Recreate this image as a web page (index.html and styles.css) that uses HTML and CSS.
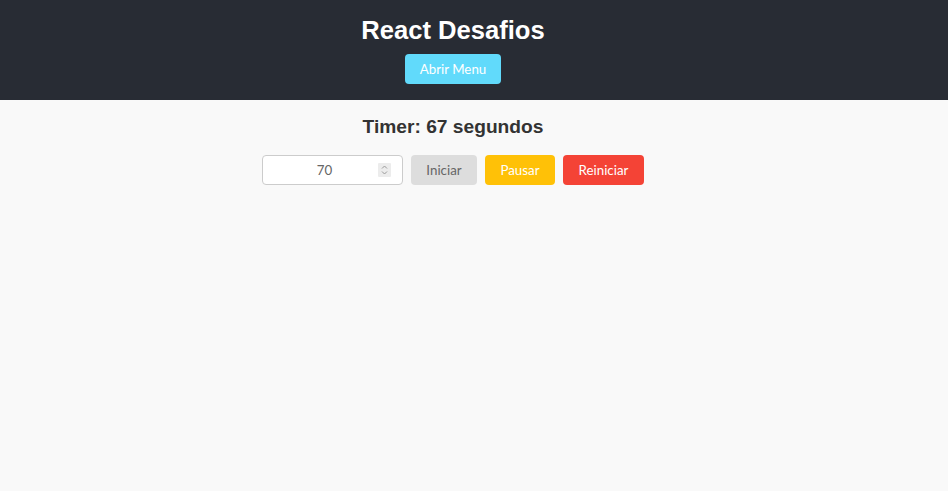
FILE: index.html
```html
<!DOCTYPE html>
<html lang="pt-BR">
<head>
<meta charset="utf-8">
<title>React Desafios</title>
<link rel="stylesheet" href="styles.css">
</head>
<body>
<header class="app-header">
  <div class="inner">
    <h1 class="title">React Desafios</h1>
    <button class="btn btn-menu">Abrir Menu</button>
  </div>
</header>
<main class="content">
  <h2 class="timer">Timer: 67 segundos</h2>
  <div class="controls">
    <div class="num-input">
      <span class="num-value">70</span>
      <svg class="spinner" width="13" height="14" viewBox="0 0 13 14">
        <rect x="0" y="0" width="13" height="14" rx="1" fill="#ececec"/>
        <path d="M4 5.5 L6.5 3 L9 5.5" fill="none" stroke="#9a9a9a" stroke-width="1"/>
        <path d="M4 8.5 L6.5 11 L9 8.5" fill="none" stroke="#9a9a9a" stroke-width="1"/>
      </svg>
    </div>
    <button class="btn btn-start">Iniciar</button>
    <button class="btn btn-pause">Pausar</button>
    <button class="btn btn-reset">Reiniciar</button>
  </div>
</main>
</body>
</html>
```
FILE: styles.css
```css
html, body {
  margin: 0;
  padding: 0;
}
body {
  background: #f9f9f9;
  font-family: "Liberation Sans", Arial, sans-serif;
  height: 491px;
}
.app-header {
  background: #282c34;
  height: 100px;
  box-sizing: border-box;
  padding-top: 15px;
}
.inner, .content {
  margin-right: 42px;
  display: flex;
  flex-direction: column;
  align-items: center;
}
.title {
  margin: 0;
  color: #ffffff;
  font-size: 25.6px;
  line-height: 30px;
  font-weight: bold;
}
.btn {
  font-family: Lato, "Noto Sans", sans-serif;
  font-size: 13.33px;
  border: none;
  border-radius: 4px;
  height: 30px;
  padding: 0 8px;
  color: #ffffff;
  white-space: nowrap;
  cursor: pointer;
}
.btn-menu {
  margin-top: 9px;
  background: #61dafb;
  width: 96px;
}
.timer {
  margin: 15px 0 16px;
  color: #333333;
  font-size: 19.2px;
  line-height: 24px;
  font-weight: bold;
}
.controls {
  display: flex;
  gap: 8px;
}
.num-input {
  width: 141px;
  height: 30px;
  box-sizing: border-box;
  border: 1px solid #cccccc;
  border-radius: 4px;
  background: #ffffff;
  display: flex;
  align-items: center;
  padding: 0 11px 0 8px;
  font-family: Lato, "Noto Sans", sans-serif;
  font-size: 13.33px;
  color: #666666;
}
.num-value {
  flex: 1;
  text-align: center;
}
.spinner {
  display: block;
}
.btn-start {
  background: #dddddd;
  color: #666666;
  width: 66px;
}
.btn-pause {
  background: #ffc107;
  width: 70px;
}
.btn-reset {
  background: #f44336;
  width: 81px;
}
```
